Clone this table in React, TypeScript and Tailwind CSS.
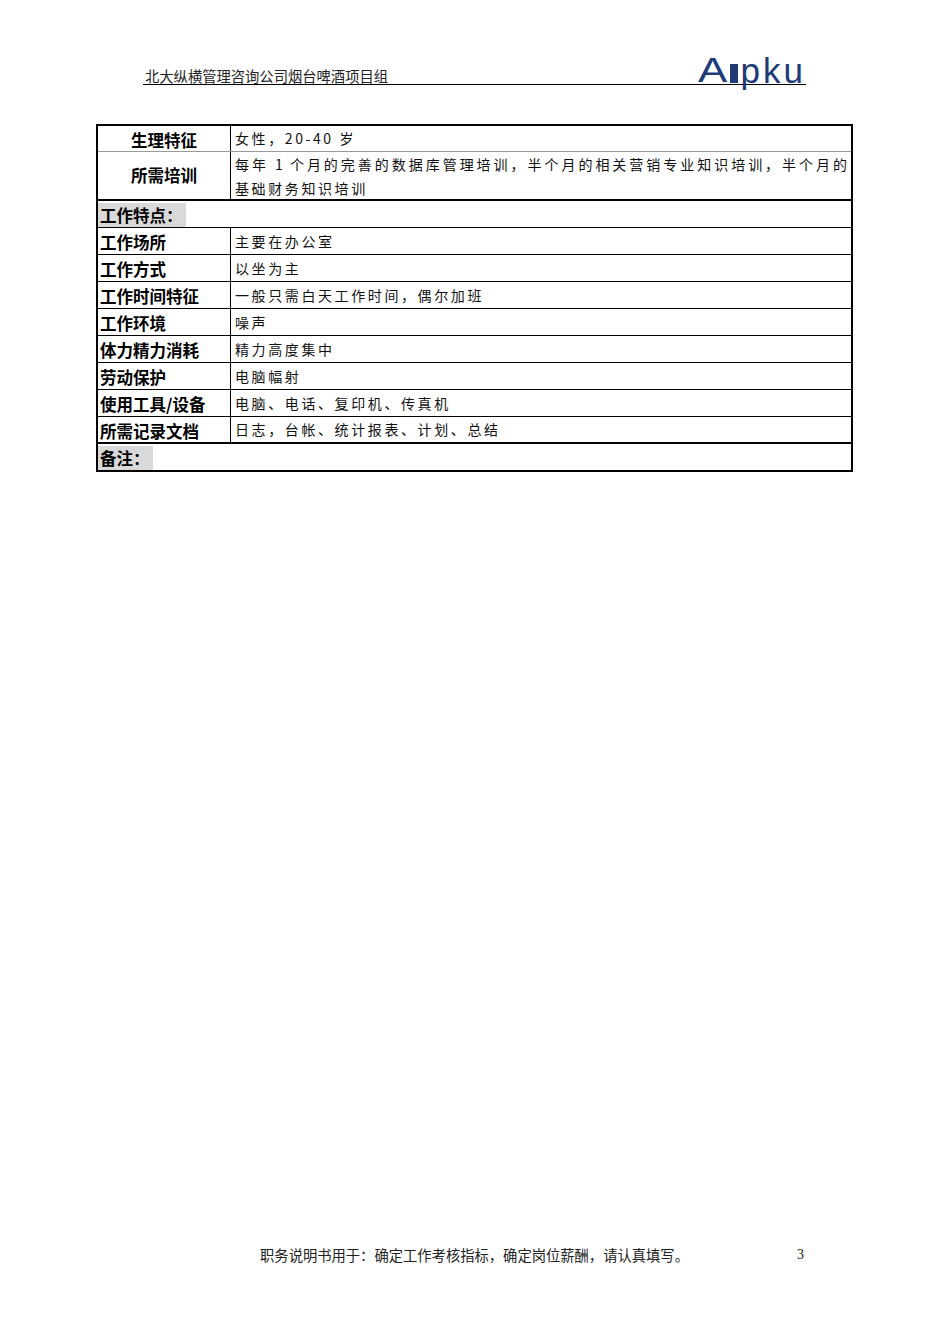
const label = "font-bold text-[16.5px] text-black";
const value = "text-[14px] tracking-[2.6px] text-[#111]";

type Row = { name: string; text: string; thickBottom?: boolean };

const rows: Row[] = [
  { name: "工作场所", text: "主要在办公室" },
  { name: "工作方式", text: "以坐为主" },
  { name: "工作时间特征", text: "一般只需白天工作时间，偶尔加班" },
  { name: "工作环境", text: "噪声" },
  { name: "体力精力消耗", text: "精力高度集中" },
  { name: "劳动保护", text: "电脑幅射" },
  { name: "使用工具/设备", text: "电脑、电话、复印机、传真机" },
  { name: "所需记录文档", text: "日志，台帐、统计报表、计划、总结", thickBottom: true },
];

function Logo() {
  return (
    <div className="flex items-end h-[32px] -mb-[3px] text-[#1e3b78] font-['Liberation_Sans',sans-serif] leading-none">
      <span className="text-[35px] font-normal scale-x-[1.25] origin-left mr-[6px]">A</span>
      <span className="w-[8px] h-[19px] bg-[#1e3b78] mb-[4px] ml-[2px] mr-[3px]"></span>
      <span className="text-[35px] font-normal tracking-[3px] -mb-[1px]">pku</span>
    </div>
  );
}

export default function App() {
  return (
    <div
      className="w-[950px] h-[1344px] bg-white flex flex-col"
      style={{ fontFamily: "'Noto Sans CJK SC', 'Noto Sans', sans-serif" }}
    >
      {/* header */}
      <div className="mt-[55px] ml-[143px] w-[663px] flex items-end justify-between border-b border-black h-[30px]">
        <span className="text-[14.3px] text-[#222] pl-[2px] pb-[1px] leading-none">
          北大纵横管理咨询公司烟台啤酒项目组
        </span>
        <Logo />
      </div>

      {/* table */}
      <div className="mt-[39px] ml-[96px] w-[757px] border-x-2 border-t-2 border-black">
        <div className="flex h-[26px] border-b border-[#9a9a9a]">
          <div className={`w-[133px] border-r border-black flex items-center justify-center pt-[4px] ${label}`}>
            生理特征
          </div>
          <div className={`flex-1 flex items-center pl-[4px] ${value}`}>女性，20-40 岁</div>
        </div>
        <div className="flex h-[49px] border-b-2 border-black">
          <div className={`w-[133px] border-r border-black flex items-center justify-center ${label}`}>
            所需培训
          </div>
          <div className={`flex-1 flex flex-col justify-center pl-[4px] pr-[3px] leading-[24px] ${value}`}>
            <div className="text-justify [text-align-last:justify] tracking-[1px]">
              每年 1 个月的完善的数据库管理培训，半个月的相关营销专业知识培训，半个月的
            </div>
            <div>基础财务知识培训</div>
          </div>
        </div>
        <div className="flex h-[27px] border-b border-black items-end">
          <span className={`bg-[#d9d9d9] pl-[2px] pr-[3px] leading-[24px] ${label}`}>工作特点：</span>
        </div>
        {rows.map((r) => (
          <div
            key={r.name}
            className={`flex h-[27px] ${r.thickBottom ? "border-b-2" : "border-b"} border-black`}
          >
            <div className={`w-[133px] border-r border-black flex items-center pl-[2px] pt-[3px] ${label}`}>
              {r.name}
            </div>
            <div className={`flex-1 flex items-center pl-[4px] ${value}`}>{r.text}</div>
          </div>
        ))}
        <div className="flex h-[28px] border-b-2 border-black items-end">
          <span className={`bg-[#d9d9d9] pl-[2px] pr-[3px] leading-[24px] ${label}`}>备注：</span>
        </div>
      </div>

      <div className="flex-1"></div>

      {/* footer */}
      <div className="ml-[143px] w-[663px] mb-[79px] grid grid-cols-[1fr_auto_1fr] items-center">
        <div></div>
        <div className="text-[14.3px] text-[#222]">职务说明书用于：确定工作考核指标，确定岗位薪酬，请认真填写。</div>
        <div className="text-right text-[14px] text-[#222] font-['Liberation_Serif',serif] pr-[2px]">3</div>
      </div>
    </div>
  );
}
